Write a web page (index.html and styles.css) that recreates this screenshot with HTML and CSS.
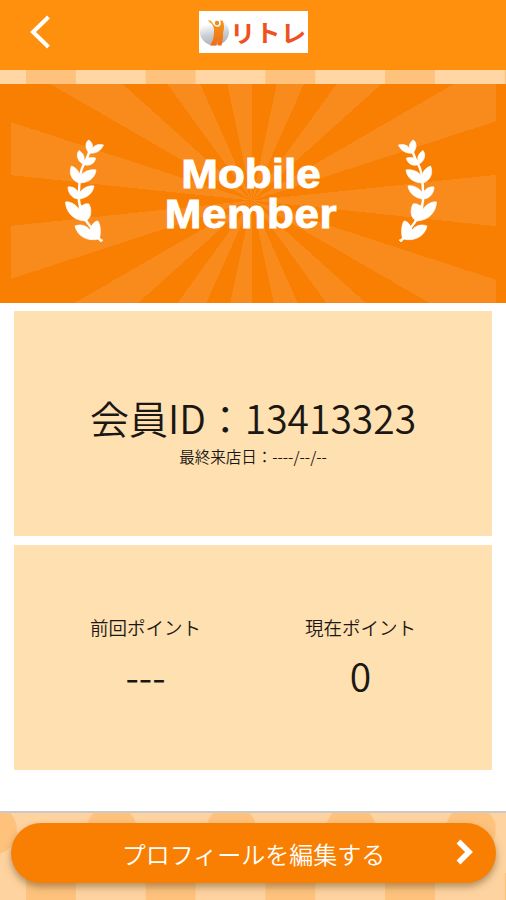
FILE: index.html
```html
<!DOCTYPE html>
<html lang="ja">
<head>
<meta charset="utf-8">
<title>リトレ</title>
<link rel="stylesheet" href="styles.css">
</head>
<body>
<header class="header">
  <svg class="back" width="22" height="34" viewBox="0 0 22 34"><path d="M19.500 2 4 17 19.500 32" fill="none" stroke="#fff" stroke-width="4"/></svg>
  <div class="logo">
    <svg class="mark" width="31" height="42" viewBox="0 0 31 42">
      <defs><linearGradient id="ball" x1="0" y1="0" x2="0.2" y2="1"><stop offset=".25" stop-color="#fff"/><stop offset=".65" stop-color="#cbd0d6"/><stop offset="1" stop-color="#b0b5bc"/></linearGradient>
      <linearGradient id="body" x1="0" y1="0" x2="0" y2="1"><stop offset="0" stop-color="#f39a16"/><stop offset="1" stop-color="#f26a1b"/></linearGradient></defs>
      <ellipse cx="15.500" cy="21" rx="14.500" ry="13.500" fill="url(#ball)"/>
      <path d="M8.500 9.500C13 12 15.500 16 15 20 15 26 14 30 11 34.500L17 34.500C18 32 19 30 19.500 27 19 30 18.500 32 19 34.500L22.500 34.500C23.500 30 24.500 27 24 22 25.500 17 25.500 13 23.500 9.500L21 9.500C23 13 21 16 18.500 16 15 16 14 12 11.500 9.500Z" fill="url(#body)"/>
      <circle cx="18" cy="12" r="2.200" fill="#f18a18"/>
    </svg>
    <svg class="word" width="78" height="42" viewBox="0 0 78 42"><text x="0" y="30.500" textLength="76" lengthAdjust="spacingAndGlyphs">リトレ</text></svg>
  </div>
</header>
<div class="strip"></div>
<section class="hero">
  <svg class="laurel" width="44" height="106" viewBox="0 0 44 106">
    <defs><g id="branch" fill="#fff" stroke="#fff" stroke-width=".7" stroke-linejoin="round">
      <path d="M25 11C23 17 21 22 18 27 14 35 14.500 42 14 53 13 65 16 75 22 83L36 102" fill="none" stroke-width="2.400"/>
      <path d="M24 14C19 8 21 2 24 1 28 4 28 8 27 10 30 5 35 5 38.500 6 36 12 30 15 24 14Z"/>
      <path d="M18 25C12 22 11 15 14 11.500 18 14 20 18 19 22 22 18 27 18 30.500 19 30 25 23 28 18 25Z"/>
      <path d="M14 44C5 41 4 32 6.500 27 12 29 15 34 15 38 18 32 26 30 31 31 30 40 22 44 14 44Z"/>
      <path d="M13 60C6 59 3 53 3 48 8 47 13 51 14 55 17 49 24 46 29 47 28 55 20 60 13 60Z"/>
      <path d="M20 82C7 81 1 72 0.500 63 5 62 12 66 14 71 14 66 15 64 17 67 20 64 23 65 24 65 28 73 25 81 20 82Z"/>
      <path d="M34 100C21 103 12 96 10 87 15 85 21 86 25 91 26 87 29 82 33 82 36 87 36 96 34 100L38 101 36 103Z"/>
    </g></defs>
    <use href="#branch"/>
  </svg>
  <h1 class="title"><span>Mobile</span><span class="second">Member</span></h1>
  <svg class="laurel flip" width="44" height="106" viewBox="0 0 44 106"><use href="#branch"/></svg>
</section>
<main class="cards">
  <section class="card member">
    <p class="id">会員ID：13413323</p>
    <p class="visit">最終来店日：----/--/--</p>
  </section>
  <section class="card points">
    <div class="point"><p class="label">前回ポイント</p><p class="value">---</p></div>
    <div class="point"><p class="label">現在ポイント</p><p class="value">0</p></div>
  </section>
</main>
<footer class="footer">
  <button class="edit"><span class="caption">プロフィールを編集する</span>
  <svg class="next" width="18" height="26" viewBox="0 0 18 26"><path d="M2.500 2.500 13 13 2.500 23.500" fill="none" stroke="#fff" stroke-width="5.500"/></svg></button>
</footer>
</body>
</html>
```
FILE: styles.css
```css
* { box-sizing: border-box; }
body {
  margin: 0;
  height: 900px;
  display: flex;
  flex-direction: column;
  overflow: hidden;
  background: #fff;
  color: #1b1713;
  font-family: "Noto Sans CJK JP", sans-serif;
  font-weight: 350;
}
p, h1 { margin: 0; }
.header {
  height: 70px;
  flex: none;
  display: grid;
  grid-template-columns: 199px 109px 1fr;
  align-items: start;
  background: #ff900d;
}
.back { margin: 15px 0 0 29px; }
.logo {
  margin-top: 11px;
  height: 42px;
  display: flex;
  align-items: flex-start;
  background: #fff;
}
.mark, .word { flex: none; }
.word text {
  font: 700 24px "Noto Sans CJK JP", sans-serif;
  fill: #ef5120;
}
.strip {
  height: 14px;
  flex: none;
  background: linear-gradient(90deg, #fec27d 50px, #ffd6a4 50px) 26px 0 / 119.700px 100%;
}
.hero {
  height: 219px;
  flex: none;
  display: grid;
  grid-template-columns: 44px 1fr 44px;
  align-items: start;
  padding: 55px 69px 0 65px;
  background: repeating-conic-gradient(from 0deg at 241px 116.500px, #f97f02 0 12deg, #f98b1c 12deg 24deg) 11px 0 / 485px 100% no-repeat #f97f02;
}
.flip { transform: scaleX(-1); }
.title {
  margin-top: 16px;
  color: #fff;
  font: 700 40px/39.500px "Liberation Sans", sans-serif;
  text-align: center;
  -webkit-text-stroke: 0.900px #fff;
  transform: scaleX(1.100);
}
.title span { display: block; }
.second { letter-spacing: .6px; }
.cards {
  display: grid;
  gap: 9px;
  padding: 8px 14px 0;
}
.card { height: 225px; background: #fee0b1; }
.member { padding-top: 78px; text-align: center; }
.id { font-size: 39px; line-height: 57px; }
.visit { font-size: 15.500px; line-height: 20px; }
.points {
  display: grid;
  grid-template-columns: 215px 215px;
  justify-content: center;
  padding-top: 69px;
  text-align: center;
}
.label { font-size: 18.500px; line-height: 27px; }
.value { font-size: 39px; line-height: 57px; margin-top: 6px; }
.footer {
  margin-top: auto;
  height: 89px;
  flex: none;
  padding: 10px 10px 0 11px;
  border-top: 2px solid #cbc8c8;
  background:
    radial-gradient(circle 25px at 60px 17px, #fec27d 24.500px, transparent 25.500px) -68px 0 / 119.700px 44px repeat-x,
    linear-gradient(90deg, #fec27d 50px, transparent 50px) 26px 60px / 119.700px 40px repeat-x,
    #fed3a0;
}
.edit {
  width: 100%;
  height: 60px;
  display: grid;
  grid-template-columns: 1fr auto;
  align-items: center;
  padding: 0 22px 0 40px;
  border: 0;
  border-radius: 30px;
  background: #f97f02;
  box-shadow: 0 4px 7px rgba(110, 80, 40, .5);
  color: #fff;
  font: 350 24px "Noto Sans CJK JP", sans-serif;
}
.next { display: block; margin-top: -2px; }
```
